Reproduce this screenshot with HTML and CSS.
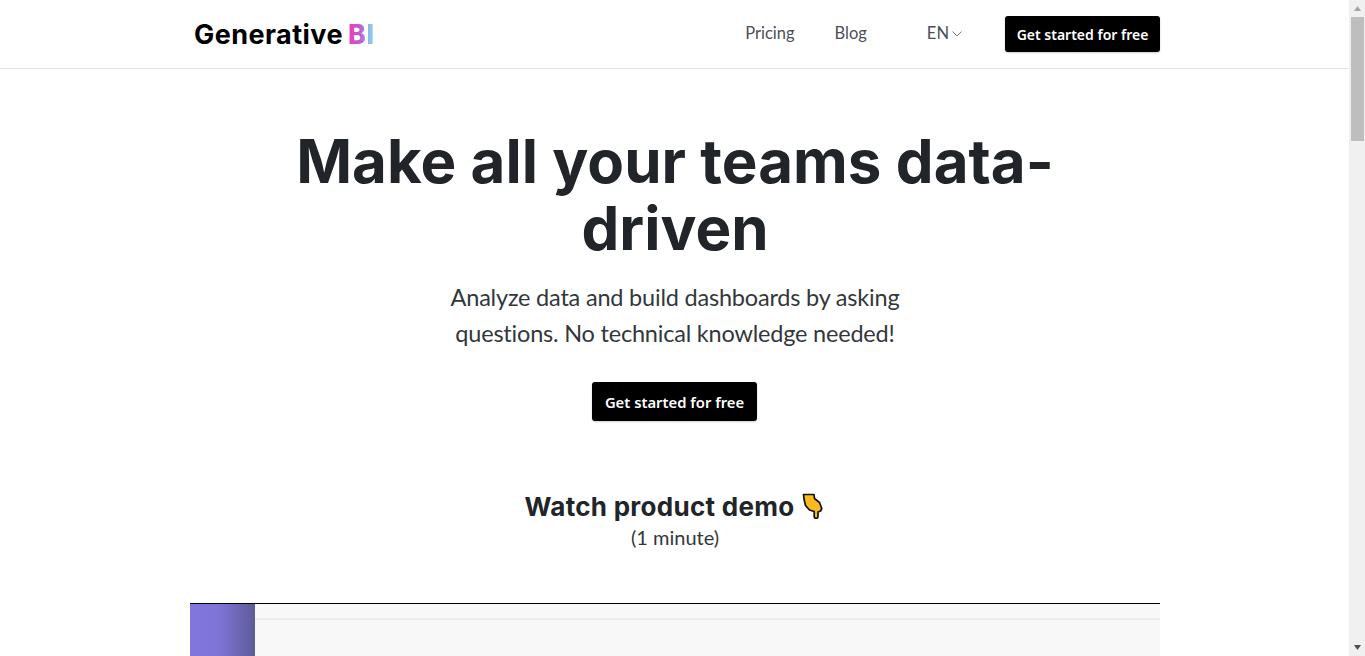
FILE: index.html
```html
<!DOCTYPE html>
<html lang="en">
<head>
  <title>Generative BI</title>
  <meta charset="UTF-8">
  <meta name="viewport" content="width=device-width, initial-scale=1">
  <link rel="stylesheet" href="styles.css">
</head>
<body>

  <div class="page">

    <header class="topbar">
      <div class="topbarInner">
        <a class="logo" href="#">Generative<span class="logoBi">BI</span></a>
        <nav class="nav">
          <a class="navLink navPricing" href="#">Pricing</a>
          <a class="navLink navBlog" href="#">Blog</a>
          <a class="navLink navLang" href="#">EN
            <svg class="chevron" width="10" height="6" viewBox="0 0 10 6"><path d="M.5.5 5 5 9.500.5" fill="none" stroke="#777" stroke-width="1"/></svg>
          </a>
          <a class="btn btnSmall" href="#">Get started for free</a>
        </nav>
      </div>
    </header>

    <main class="hero">
      <h1 class="heroTitle">Make all your teams data-<br>driven</h1>
      <p class="heroText">Analyze data and build dashboards by asking<br>questions. No technical knowledge needed!</p>
      <a class="btn btnBig" href="#">Get started for free</a>

      <h2 class="demoTitle">Watch product demo
        <svg class="hand" width="21" height="26" viewBox="0 0 21 26">
          <path d="M1.500 1.500H12L12.500 5.500 17.500 9.500 19.800 15.500 18.500 18 16 19V23.500a1.900 1.900 0 0 1-3.800 0V18.500L7.500 17 3.500 12.500 2 6Z" fill="#fcb91d" stroke="#111" stroke-width="1.700" stroke-linejoin="round"/>
        </svg>
      </h2>
      <p class="demoTime">(1 minute)</p>

      <div class="video">
        <div class="videoSide"></div>
        <div class="videoMain">
          <div class="videoBar"></div>
        </div>
      </div>
    </main>

  </div>

  <!-- the scrollbar from the screenshot -->
  <div class="scroll">
    <svg class="scrollArrow" width="15" height="17" viewBox="0 0 15 17"><path d="M8.500 6 12 11H5z" fill="#a3a3a3"/></svg>
    <div class="scrollThumb"></div>
    <svg class="scrollArrow scrollDown" width="15" height="17" viewBox="0 0 15 17"><path d="M8.500 11 5 6h7z" fill="#505050"/></svg>
  </div>

</body>
</html>
```

FILE: styles.css
```css
* {
  margin: 0;
  box-sizing: border-box;
}

html, body {
  height: 656px;
  overflow: hidden;
}

::-webkit-scrollbar {
  display: none;
}

body {
  display: flex;
  background-color: white;
  color: #212529;
  font-family: 'Open Sans', sans-serif;
}

a {
  text-decoration: none;
}

.page {
  flex: 1;
  min-width: 0;
  height: 656px;
  overflow: hidden;
}

.topbar {
  height: 69px;
  border-bottom: 1px solid #e2e2e2;
}

.topbarInner {
  width: 970px;
  height: 68px;
  margin: 0 auto;
  display: flex;
  align-items: center;
  justify-content: space-between;
}

.logo {
  margin-left: 4px;
  color: #000;
  font-family: 'Inter', sans-serif;
  font-size: 27px;
  font-weight: 700;
  letter-spacing: 0.45px;
  white-space: pre;
}

.logoBi {
  margin-left: 5px;
  font-weight: 800;
  background: linear-gradient(90deg, #f03fb0 0%, #c05ad8 45%, #8fb8ec 75%, #8fd8ec 100%);
  -webkit-background-clip: text;
  background-clip: text;
  color: transparent;
}

.nav {
  display: flex;
  align-items: center;
}

.navLink {
  color: #4a4f55;
  font-family: 'Lato', sans-serif;
  font-size: 16.5px;
  margin-top: -3px;
}

.navPricing {
  margin-right: 40px;
}

.navBlog {
  margin-right: 60px;
}

.navLang {
  display: flex;
  align-items: center;
  gap: 3px;
  margin-right: 43px;
}

.chevron {
  margin-top: 2px;
}

.btn {
  display: block;
  background-color: #000;
  color: white;
  font-family: 'Noto Sans', sans-serif;
  font-weight: 600;
  border-radius: 3px;
  text-align: center;
  box-shadow: 0 1px 2px rgba(0, 0, 0, 0.2);
}

.btnSmall {
  width: 155px;
  height: 36px;
  line-height: 38px;
  font-size: 14px;
}

.btnBig {
  width: 165px;
  height: 39px;
  line-height: 40px;
  font-size: 14.8px;
  margin: 31px 0 0 402px;
}

.hero {
  width: 970px;
  margin: 0 auto;
  text-align: center;
}

.heroTitle {
  margin-top: 59px;
  font-family: 'Inter', sans-serif;
  font-size: 60px;
  font-weight: 700;
  line-height: 67px;
  letter-spacing: 0.05px;
}

.heroText {
  margin-top: 17px;
  font-family: 'Lato', sans-serif;
  font-size: 23.500px;
  letter-spacing: -0.2px;
  line-height: 36px;
  color: #33373b;
}

.demoTitle {
  margin-top: 67px;
  padding-right: 2px;
  display: flex;
  align-items: center;
  justify-content: center;
  gap: 8px;
  height: 36px;
  font-family: 'Inter', sans-serif;
  font-size: 26px;
  font-weight: 700;
  letter-spacing: 0.28px;
}

.demoTime {
  margin-top: -1px;
  font-family: 'Lato', sans-serif;
  font-size: 20px;
  line-height: 28px;
  color: #33373b;
}

.video {
  display: flex;
  height: 60px;
  margin-top: 52px;
  border-top: 1px solid #000;
}

.videoSide {
  width: 65px;
  background: linear-gradient(90deg, #8076dc 0%, #7f74d6 45%, #5d5c96 100%);
}

.videoMain {
  flex: 1;
  background-color: #f8f8f8;
}

.videoBar {
  height: 2px;
  margin-top: 14px;
  background-color: #ebebeb;
}

.scroll {
  width: 16px;
  height: 656px;
  margin-left: -1px;
  display: flex;
  flex-direction: column;
  background-color: #f0f0f0;
}

.scrollThumb {
  width: 13px;
  height: 124px;
  margin-left: 2px;
  background-color: #bebebe;
}

.scrollDown {
  margin-top: auto;
}
```
